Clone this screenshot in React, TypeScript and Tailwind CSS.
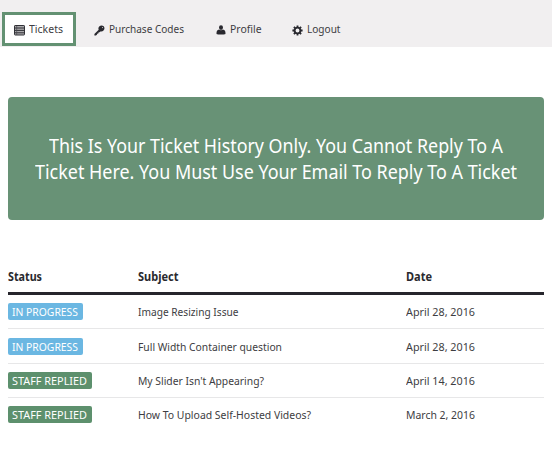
import { useLayoutEffect, useRef, useState, type ReactNode } from "react";

// Condenses a single line of text to the given measure.
function Line({ width, children, className = "" }: { width: number; children: string; className?: string }) {
  const ref = useRef<HTMLSpanElement>(null);
  const [scale, setScale] = useState(1);
  useLayoutEffect(() => {
    if (ref.current) setScale(width / ref.current.getBoundingClientRect().width * scale);
  }, [width]);
  return (
    <span className={`block whitespace-nowrap ${className}`} style={{ width }}>
      <span ref={ref} className="inline-block origin-left" style={{ transform: `scaleX(${scale})` }}>
        {children}
      </span>
    </span>
  );
}

const ListIcon = () => (
  <svg className="h-[11px] w-[11px]" viewBox="0 0 11 11">
    <rect x="0.5" y="0.5" width="10" height="9.5" rx="0.6" fill="#aaa9ac" stroke="#303036" />
    <path d="M1 3H10M1 5.4H10M1 7.8H10" stroke="#303036" strokeWidth="1" />
    <path d="M2.7 1V10" stroke="#4b4b50" strokeWidth="0.7" />
  </svg>
);

const KeyIcon = () => (
  <svg className="h-[11px] w-[11px]" viewBox="0 0 11 11">
    <path
      fill="#29292f"
      fillRule="evenodd"
      d="M5.2 1.4C6.5.1 8.5.1 9.7 1.2 10.8 2.4 10.7 4.4 9.5 5.6 8.6 6.5 7.4 6.8 6.4 6.4L5.5 7.3 4.5 7.4 4.3 8.5 3.2 8.7 2.9 9.8 1.9 10.4H.4V9L4.7 4.7C4.2 3.6 4.4 2.3 5.2 1.4ZM7.8 2.1 8.9 3.2C9.2 2.9 9.2 2.5 8.9 2.2 8.6 1.9 8.1 1.9 7.8 2.1Z"
    />
  </svg>
);

const PersonIcon = () => (
  <svg className="h-[10px] w-[10px]" viewBox="0 0 10 10">
    <ellipse cx="5" cy="2.6" rx="2" ry="2.4" fill="#29292f" />
    <path fill="#29292f" d="M3.1 4.6C3.8 5.6 6.2 5.6 6.9 4.6 8.8 4.9 9.6 6.1 9.5 8.9 8.2 9.8 1.8 9.8.5 8.9.4 6.1 1.2 4.9 3.1 4.6Z" />
  </svg>
);

const GearIcon = () => (
  <svg className="h-[11px] w-[11px]" viewBox="0 0 11 11">
    <circle cx="5.5" cy="5.5" r="2.9" fill="none" stroke="#29292f" strokeWidth="1.9" />
    <path
      d="M5.5.4V2.2M5.5 8.8V10.6M.4 5.5H2.2M8.8 5.5H10.6M1.9 1.9 3.1 3.1M7.9 7.9 9.1 9.1M9.1 1.9 7.9 3.1M3.1 7.9 1.9 9.1"
      stroke="#29292f"
      strokeWidth="1.8"
    />
  </svg>
);

function NavItem({ icon, label, width, className }: { icon: ReactNode; label: string; width: number; className: string }) {
  return (
    <a className={`flex h-[34px] items-center ${className}`}>
      <span className="mt-[2px] mr-[4px] shrink-0">{icon}</span>
      <Line width={width} className="mb-[2px]">{label}</Line>
    </a>
  );
}

const tickets = [
  { status: "IN PROGRESS", statusWidth: 66, subject: "Image Resizing Issue", subjectWidth: 100.5, date: "April 28, 2016" },
  { status: "IN PROGRESS", statusWidth: 66, subject: "Full Width Container question", subjectWidth: 144, date: "April 28, 2016" },
  { status: "STAFF REPLIED", statusWidth: 75, subject: "My Slider Isn't Appearing?", subjectWidth: 126, date: "April 14, 2016" },
  { status: "STAFF REPLIED", statusWidth: 75, subject: "How To Upload Self-Hosted Videos?", subjectWidth: 173, date: "March 2, 2016" },
];

const columns = "grid grid-cols-[130px_268px_1fr] items-center";

export default function App() {
  return (
    <div className="h-[468px] w-[552px] overflow-hidden bg-white font-['Noto_Sans',sans-serif] text-[11px] leading-[17px] text-[#3d3d42]">
      <nav className="flex h-[47px] items-start bg-[#f1eff0] pt-[12px] pl-[2px]">
        <NavItem icon={<ListIcon />} label="Tickets" width={34} className="w-[74px] border-[3px] border-[#639172] bg-white pl-[9.4px]" />
        <NavItem icon={<KeyIcon />} label="Purchase Codes" width={75} className="ml-[18px]" />
        <NavItem icon={<PersonIcon />} label="Profile" width={31.5} className="ml-[31.5px]" />
        <NavItem icon={<GearIcon />} label="Logout" width={33.5} className="ml-[31px]" />
      </nav>

      <h1 className="mt-[50px] ml-[7.5px] flex h-[123px] w-[536px] flex-col items-center rounded-[4px] bg-[#689276] pt-[36px] text-[20px] leading-[26px] font-normal text-white">
        <Line width={454}>This Is Your Ticket History Only. You Cannot Reply To A</Line>
        <Line width={482}>Ticket Here. You Must Use Your Email To Reply To A Ticket</Line>
      </h1>

      <section className="mt-[47px] ml-[7.5px] w-[536px]">
        <header className={`${columns} h-[28px] border-b-[3px] border-[#26252c] pb-[6px] text-[13px] font-bold text-[#29292e]`}>
          <Line width={34}>Status</Line>
          <Line width={40.5}>Subject</Line>
          <Line width={26}>Date</Line>
        </header>
        {tickets.map((ticket, index) => (
          <div
            key={ticket.subject}
            className={`${columns} h-[34.4px] ${index < tickets.length - 1 ? "border-b border-[#e7e7e8]" : "pb-[1.5px]"}`}
          >
            <span
              className={`flex h-[17px] w-fit items-center rounded-[2px] px-[4.5px] text-white ${
                ticket.status === "IN PROGRESS" ? "bg-[#6bb7e2]" : "bg-[#5d906d]"
              }`}
            >
              <Line width={ticket.statusWidth}>{ticket.status}</Line>
            </span>
            <Line width={ticket.subjectWidth}>{ticket.subject}</Line>
            <Line width={69}>{ticket.date}</Line>
          </div>
        ))}
      </section>
    </div>
  );
}
